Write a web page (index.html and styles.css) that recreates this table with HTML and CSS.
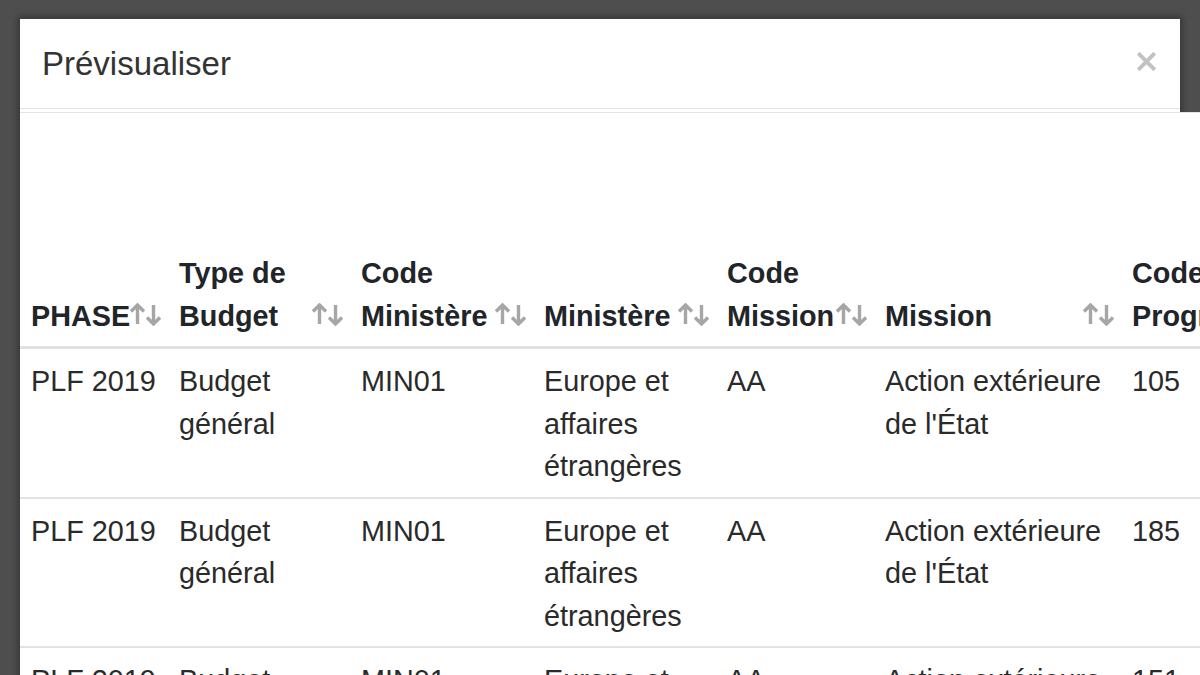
FILE: index.html
```html
<!DOCTYPE html>
<html lang="fr">
<head>
<meta charset="utf-8">
<title>Prévisualiser</title>
<link rel="stylesheet" href="styles.css">
</head>
<body>
<div class="modal">
  <div class="modal-header">
    <h4 class="modal-title">Prévisualiser</h4>
    <button class="close" aria-label="Fermer">
      <svg width="19" height="19" viewBox="0 0 19 19"><path d="M1.2 1.2L17.8 17.8M17.8 1.2L1.2 17.8" fill="none" stroke="#c2c2c2" stroke-width="4"/></svg>
    </button>
  </div>
  <div class="modal-body">
    <table class="table">
      <colgroup>
        <col class="c1"><col class="c2"><col class="c3"><col class="c4"><col class="c5"><col class="c6"><col class="c7">
      </colgroup>
      <thead>
        <tr>
          <th><div class="th-inner"><span>PHASE</span><svg class="sort" width="31" height="23" viewBox="0 0 31 23"><path d="M7.5 2.5V21M1 8.5L7.5 2L14 8.5M23.5 2V20.5M17 14.5L23.5 21L30 14.5"/></svg></div></th>
          <th><div class="th-inner"><span>Type de Budget</span><svg class="sort" width="31" height="23" viewBox="0 0 31 23"><path d="M7.5 2.5V21M1 8.5L7.5 2L14 8.5M23.5 2V20.5M17 14.5L23.5 21L30 14.5"/></svg></div></th>
          <th><div class="th-inner"><span>Code Ministère</span><svg class="sort" width="31" height="23" viewBox="0 0 31 23"><path d="M7.5 2.5V21M1 8.5L7.5 2L14 8.5M23.5 2V20.5M17 14.5L23.5 21L30 14.5"/></svg></div></th>
          <th><div class="th-inner"><span>Ministère</span><svg class="sort" width="31" height="23" viewBox="0 0 31 23"><path d="M7.5 2.5V21M1 8.5L7.5 2L14 8.5M23.5 2V20.5M17 14.5L23.5 21L30 14.5"/></svg></div></th>
          <th><div class="th-inner"><span>Code Mission</span><svg class="sort" width="31" height="23" viewBox="0 0 31 23"><path d="M7.5 2.5V21M1 8.5L7.5 2L14 8.5M23.5 2V20.5M17 14.5L23.5 21L30 14.5"/></svg></div></th>
          <th><div class="th-inner"><span>Mission</span><svg class="sort" width="31" height="23" viewBox="0 0 31 23"><path d="M7.5 2.5V21M1 8.5L7.5 2L14 8.5M23.5 2V20.5M17 14.5L23.5 21L30 14.5"/></svg></div></th>
          <th><div class="th-inner"><span>Code Programme</span><svg class="sort" width="31" height="23" viewBox="0 0 31 23"><path d="M7.5 2.5V21M1 8.5L7.5 2L14 8.5M23.5 2V20.5M17 14.5L23.5 21L30 14.5"/></svg></div></th>
        </tr>
      </thead>
      <tbody>
        <tr>
          <td>PLF 2019</td><td>Budget général</td><td>MIN01</td><td>Europe et affaires étrangères</td><td>AA</td><td>Action extérieure de l'État</td><td>105</td>
        </tr>
        <tr>
          <td>PLF 2019</td><td>Budget général</td><td>MIN01</td><td>Europe et affaires étrangères</td><td>AA</td><td>Action extérieure de l'État</td><td>185</td>
        </tr>
        <tr>
          <td>PLF 2019</td><td>Budget général</td><td>MIN01</td><td>Europe et affaires étrangères</td><td>AA</td><td>Action extérieure de l'État</td><td>151</td>
        </tr>
      </tbody>
    </table>
  </div>
</div>
</body>
</html>
```
FILE: styles.css
```css
html, body {
  margin: 0;
  padding: 0;
  height: 675px;
  overflow: hidden;
}
body {
  background: #4e4e4e;
  font-family: "Liberation Sans", Arial, sans-serif;
  color: #212529;
}
.modal {
  width: 1160px;
  margin: 19px 0 0 20px;
  background: #fff;
  box-shadow: 0 0 7px 2px rgba(0, 0, 0, 0.35);
}
.modal-header {
  display: flex;
  justify-content: space-between;
  align-items: flex-start;
  padding: 27px 22px 26px 22px;
  border-bottom: 1px solid #e3e3e3;
}
.modal-title {
  margin: 0;
  font-size: 33px;
  line-height: 36px;
  font-weight: 500;
  color: #333;
}
.close {
  margin: 6px 2px 0 0;
  padding: 0;
  border: 0;
  background: none;
  display: flex;
}
.modal-body {
  width: 1321px;
  margin-top: 3px;
  background: #fff;
  border-top: 1px solid #e3e3e3;
  padding-top: 129px;
}
.table {
  border-collapse: collapse;
  table-layout: fixed;
  width: 1321px;
  font-size: 28.8px;
  line-height: 42.5px;
}
.c1 { width: 148px; }
.c2 { width: 182px; }
.c3 { width: 183px; }
.c4 { width: 183px; }
.c5 { width: 158px; }
.c6 { width: 247px; }
.c7 { width: 220px; }
.table th {
  text-align: left;
  vertical-align: bottom;
  font-weight: bold;
  color: #212529;
  padding: 10px 7px 9px 11px;
  border-bottom: 3px solid #dee2e6;
}
.th-inner {
  display: flex;
  justify-content: space-between;
  align-items: flex-end;
}
.sort {
  flex: none;
  margin-bottom: 11px;
}
.sort path {
  fill: none;
  stroke: #a6a6a6;
  stroke-width: 3.4;
}
.table td {
  vertical-align: top;
  color: #2a2a2a;
  padding: 11px 11px 9px 11px;
  border-bottom: 2px solid #e1e2e8;
}
```
